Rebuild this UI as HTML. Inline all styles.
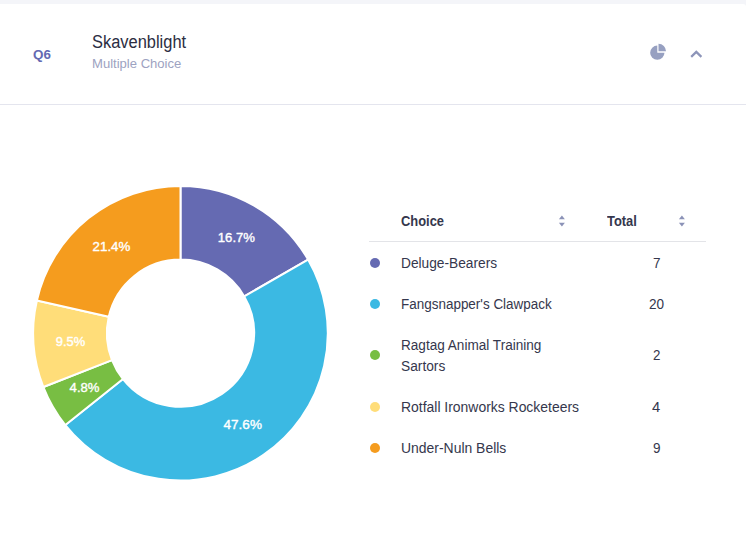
<!DOCTYPE html>
<html lang="en">
<head>
<meta charset="utf-8">
<title>Skavenblight</title>
<style>
html,body{margin:0;padding:0}
body{width:746px;height:559px;overflow:hidden;background:#f4f5f9;font-family:"Liberation Sans",sans-serif;position:relative}
.card{position:absolute;left:0;top:4px;width:746px;height:555px;background:#fff;border-top-right-radius:3px}
.hr{position:absolute;left:0;top:104px;width:746px;height:1px;background:#e4e5ee}
.thr{position:absolute;left:369px;top:241px;width:337px;height:1px;background:#e3e4e8}
.t{position:absolute;white-space:nowrap;line-height:20px;transform-origin:0 0;display:block}
.dot{position:absolute;width:10px;height:10px;border-radius:50%;left:370.2px}
svg{position:absolute;left:0;top:0}
.lab text{font-family:"Liberation Sans",sans-serif;font-size:13.5px;font-weight:400;fill:#fff}
</style>
</head>
<body>
<div class="card"></div>
<div class="hr"></div>
<div class="thr"></div>
<span class="t" style="left:32.70px;top:44.5px;font-size:13.5px;font-weight:700;color:#6469b2;transform:scaleX(0.9932)">Q6</span>
<span class="t" style="left:92.10px;top:32.0px;font-size:18px;font-weight:400;color:#2b2d42;transform:scaleX(0.9128)">Skavenblight</span>
<span class="t" style="left:92.10px;top:53.5px;font-size:13.5px;font-weight:400;color:#9da2c1;transform:scaleX(0.9674)">Multiple Choice</span>
<span class="t" style="left:401.20px;top:211.0px;font-size:14px;font-weight:700;color:#35374d;transform:scaleX(0.9210)">Choice</span>
<span class="t" style="left:607.10px;top:211.0px;font-size:14px;font-weight:700;color:#35374d;transform:scaleX(0.9226)">Total</span>
<span class="t" style="left:401.40px;top:253.0px;font-size:14px;font-weight:400;color:#35374d;transform:scaleX(0.9803)">Deluge-Bearers</span>
<span class="t" style="left:401.30px;top:294.0px;font-size:14px;font-weight:400;color:#35374d;transform:scaleX(0.9617)">Fangsnapper&#39;s Clawpack</span>
<span class="t" style="left:401.40px;top:335.0px;font-size:14px;font-weight:400;color:#35374d;transform:scaleX(0.9699)">Ragtag Animal Training</span>
<span class="t" style="left:401.30px;top:356.0px;font-size:14px;font-weight:400;color:#35374d;transform:scaleX(0.9819)">Sartors</span>
<span class="t" style="left:401.40px;top:397.0px;font-size:14px;font-weight:400;color:#35374d;transform:scaleX(0.9947)">Rotfall Ironworks Rocketeers</span>
<span class="t" style="left:401.40px;top:438.0px;font-size:14px;font-weight:400;color:#35374d;transform:scaleX(0.9949)">Under-Nuln Bells</span>
<span class="t" style="left:652.50px;top:253.0px;font-size:14px;font-weight:400;color:#35374d;transform:scaleX(0.9653)">7</span>
<span class="t" style="left:648.70px;top:294.0px;font-size:14px;font-weight:400;color:#35374d;transform:scaleX(0.9695)">20</span>
<span class="t" style="left:652.60px;top:345.0px;font-size:14px;font-weight:400;color:#35374d;transform:scaleX(0.9524)">2</span>
<span class="t" style="left:652.20px;top:397.0px;font-size:14px;font-weight:400;color:#35374d;transform:scaleX(1.0553)">4</span>
<span class="t" style="left:652.50px;top:438.0px;font-size:14px;font-weight:400;color:#35374d;transform:scaleX(0.9653)">9</span>
<i class="dot" style="top:258.2px;background:#656ab2"></i>
<i class="dot" style="top:299.2px;background:#3bb9e3"></i>
<i class="dot" style="top:349.8px;background:#78be43"></i>
<i class="dot" style="top:402.2px;background:#ffdd79"></i>
<i class="dot" style="top:443.2px;background:#f59c1e"></i>
<svg width="746" height="559" viewBox="0 0 746 559">
<g stroke="#fff" stroke-width="2" stroke-linejoin="round">
<path d="M180.50 185.90A147.3 147.3 0 0 1 308.07 259.55L244.24 296.40A73.6 73.6 0 0 0 180.50 259.60Z" fill="#656ab2"/>
<path d="M308.07 259.55A147.3 147.3 0 0 1 65.34 425.04L122.96 379.09A73.6 73.6 0 0 0 244.24 296.40Z" fill="#3bb9e3"/>
<path d="M65.34 425.04A147.3 147.3 0 0 1 43.38 387.01L111.99 360.09A73.6 73.6 0 0 0 122.96 379.09Z" fill="#78be43"/>
<path d="M43.38 387.01A147.3 147.3 0 0 1 36.89 300.42L108.75 316.82A73.6 73.6 0 0 0 111.99 360.09Z" fill="#ffdd79"/>
<path d="M36.89 300.42A147.3 147.3 0 0 1 180.50 185.90L180.50 259.60A73.6 73.6 0 0 0 108.75 316.82Z" fill="#f59c1e"/>
<g class="lab" stroke="#fff" stroke-width="0.4" stroke-linejoin="round"><text transform="translate(217.80 242) scale(0.9720 1)">16.7%</text>
<text transform="translate(92.60 251) scale(0.9877 1)">21.4%</text>
<text transform="translate(55.70 346) scale(0.9584 1)">9.5%</text>
<text transform="translate(69.60 392) scale(0.9714 1)">4.8%</text>
<text transform="translate(223.60 429) scale(1.0007 1)">47.6%</text></g>
</g>
<!-- pie icon -->
<g fill="#97a0c1">
<path d="M657.3 45.55 A7.15 7.15 0 1 0 664.45 52.7 L657.3 52.7 Z"/>
<path d="M658.5 43.7 A7.5 7.5 0 0 1 666 51.2 L658.5 51.2 Z"/>
</g>
<!-- chevron -->
<path d="M691.2 56.9 L696.3 51.9 L701.4 56.9" fill="none" stroke="#8d95b9" stroke-width="2.2" stroke-linecap="butt" stroke-linejoin="miter"/>
<!-- sort arrows -->
<g fill="#8b92b7">
<path d="M558.9 219.2 L561.9 215.5 L564.9 219.2Z"/><path d="M558.9 222.8 L561.9 226.4 L564.9 222.8Z"/>
<path d="M678.9 219.2 L681.9 215.5 L684.9 219.2Z"/><path d="M678.9 222.8 L681.9 226.4 L684.9 222.8Z"/>
</g>
</svg>
</body>
</html>
